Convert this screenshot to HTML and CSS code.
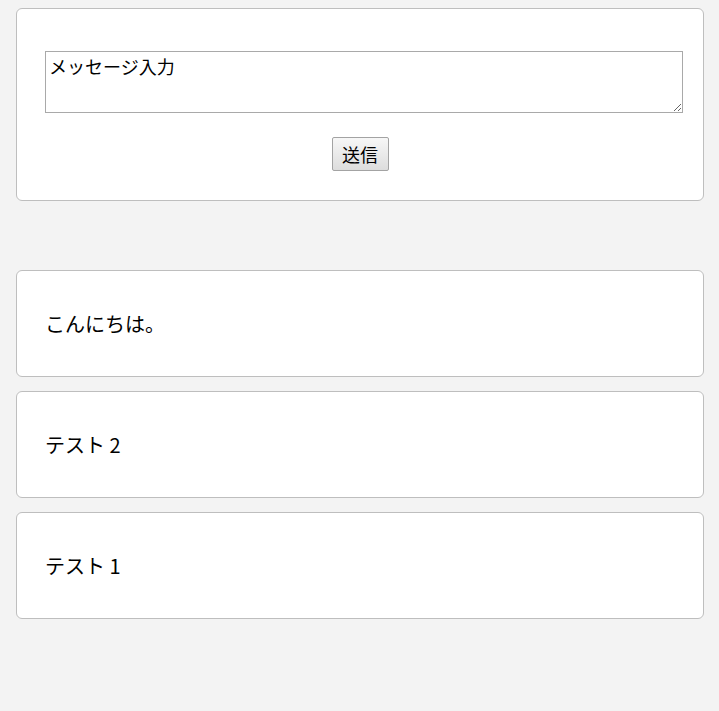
FILE: index.html
```html
<!DOCTYPE html>
<html lang="ja">
<head>
<meta charset="utf-8">
<title>メッセージ</title>
<link rel="stylesheet" href="styles.css">
</head>
<body>
<div class="page">
  <form class="card compose">
    <textarea class="input">メッセージ入力</textarea>
    <div class="actions"><button type="button" class="send">送信</button></div>
  </form>
  <ul class="messages">
    <li class="card message">こんにちは。</li>
    <li class="card message">テスト 2</li>
    <li class="card message">テスト 1</li>
  </ul>
</div>
</body>
</html>
```
FILE: styles.css
```css
html, body {
  margin: 0;
  padding: 0;
  background: #f3f3f3;
}
body {
  font-family: "Noto Sans CJK JP", "Noto Sans", sans-serif;
  color: #000;
}
.page {
  padding: 8px 15px 8px 16px;
}
.card {
  background: #fff;
  border: 1px solid #bebebe;
  border-radius: 6px;
}
.compose {
  margin: 0;
  padding: 42px 20px 29px 28px;
}
.input {
  display: block;
  box-sizing: border-box;
  width: 638px;
  height: 62px;
  margin: 0;
  padding: 2px 3px;
  border: 1px solid #a9a9a9;
  border-radius: 0;
  font-family: "Noto Sans CJK JP", "Noto Sans", sans-serif;
  font-size: 18px;
  line-height: 24px;
  color: #000;
  resize: both;
}
.actions {
  margin: 24px 8px 0 0;
  text-align: center;
}
.send {
  box-sizing: border-box;
  height: 34px;
  width: 57px;
  padding: 0;
  border: 1px solid #a3a3a3;
  border-radius: 2px;
  background: linear-gradient(#f7f7f7, #dddddd);
  font-family: "Noto Sans CJK JP", "Noto Sans", sans-serif;
  font-size: 18px;
  line-height: 24px;
  color: #000;
}
.messages {
  list-style: none;
  margin: 69px 0 0;
  padding: 0;
  display: flex;
  flex-direction: column;
  gap: 14px;
}
.message {
  padding: 38px 28px;
  font-size: 20px;
  line-height: 29px;
}
```
